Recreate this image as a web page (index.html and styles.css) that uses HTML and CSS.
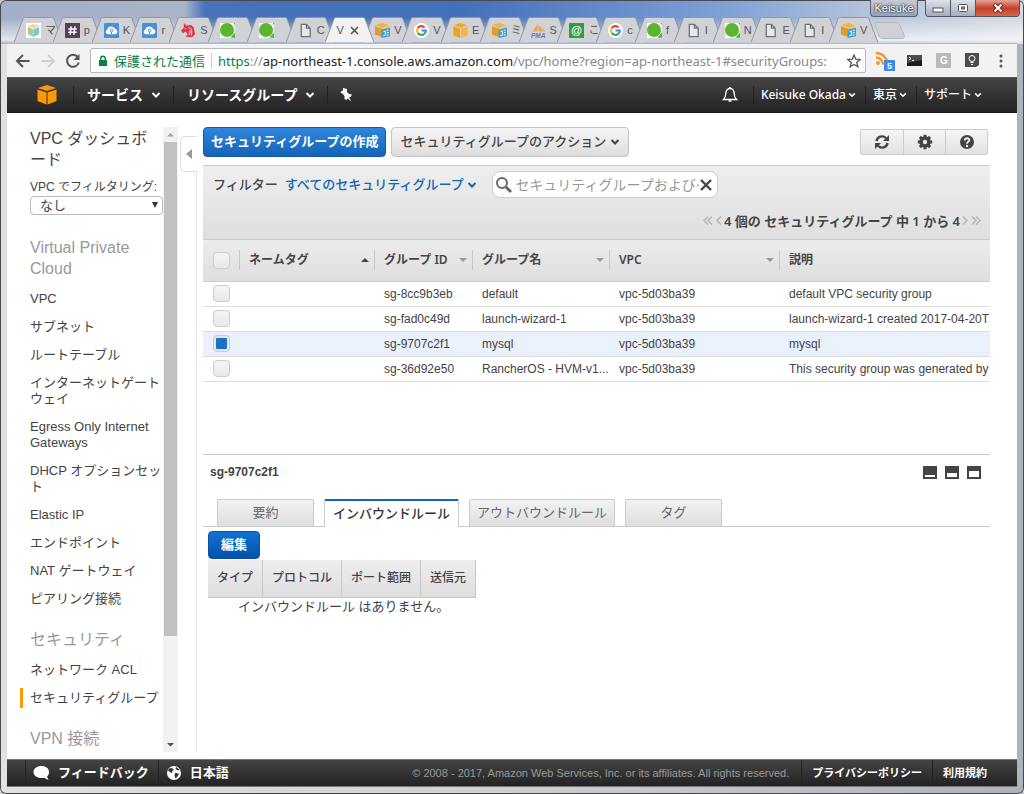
FILE: index.html
```html
<!DOCTYPE html>
<html lang="ja">
<head>
  <meta charset="UTF-8" />
  <title>VPC Management Console</title>
  <meta name="viewport" content="width=device-width, initial-scale=1.0" />
  <link rel="stylesheet" href="styles.css">
</head>
<body>
  <!-- shared icons -->
  <svg class="defs" width="0" height="0">
    <symbol id="tab-shape" viewBox="0 0 49 26" preserveAspectRatio="none">
      <path d="M0 25.5 L9 2 C9.500 .8 10 .5 11.500 .5 H37.500 C39 .5 39.500 .8 40 2 L49 25.500" stroke="#93979d" />
    </symbol>
    <symbol id="ico-box" viewBox="0 0 16 16">
      <path fill="#f5a623" d="M8 0 15 2.500 8 5 1 2.500Z" />
      <path fill="#f0a01c" d="M.5 3.500 7.500 6V16L.5 13Z" />
      <path fill="#f7b53c" d="M8.500 6 15.500 3.500V13L8.500 16Z" />
    </symbol>
    <symbol id="ico-vpc" viewBox="0 0 16 16">
      <path fill="#f3b33c" d="M8 0 15 2.500 8 5 0 2.500Z" />
      <path fill="#e59c22" d="M0 3.500 8 6V15L0 12.500Z" />
      <path fill="#f7bd4e" d="M8 6 15 3.500V9H8Z" />
      <path fill="#3e9fd8" d="M7 7 16 5V14L7 16Z" />
      <path fill="none" stroke="#fff" d="M9 9 11 8.500V13L9 13.500M12.500 8 14.500 7.500M12.500 10.500 14.500 10M12.500 13 14.500 12.500" />
    </symbol>
    <symbol id="ico-cloud" viewBox="0 0 16 16">
      <rect width="16" height="16" rx="1" fill="#4a90d9" />
      <path fill="#fff" d="M4 12a2.600 2.600 0 0 1-.5-5A4.500 4.500 0 0 1 12 6.500 2.800 2.800 0 0 1 12 12Z" />
      <circle cx="8" cy="8" r="1.500" fill="none" stroke="#4a90d9" />
      <path stroke="#4a90d9" d="M8 9.500V12" />
    </symbol>
    <symbol id="ico-q" viewBox="0 0 16 16">
      <rect width="16" height="16" fill="#fff" />
      <circle cx="7.500" cy="7.500" r="7.500" fill="#5bb531" />
      <path fill="#5bb531" d="M11 15.500 16 10V16ZM16 0V3L14.500 0Z" />
    </symbol>
    <symbol id="ico-doc" viewBox="0 0 16 16">
      <path fill="#e6e8eb" stroke="#6e7175" stroke-width="1.400" d="M3.500 1.500H9L13 5.500V14.500H3.500ZM9 1.500V5.500H13" />
    </symbol>
    <symbol id="ico-google" viewBox="0 0 16 16">
      <circle cx="8" cy="8" r="8" fill="#fff" />
      <g fill="none" stroke-width="2.200">
        <path stroke="#ea4335" d="M4 5.500A4.700 4.700 0 0 1 11.300 4.700" />
        <path stroke="#fbbc05" d="M4 5.500A5 5 0 0 0 4 10.500" />
        <path stroke="#34a853" d="M4 10.500A4.700 4.700 0 0 0 11 11.600" />
        <path stroke="#4285f4" d="M11 11.600A4.700 4.700 0 0 0 12.700 8H8" />
      </g>
    </symbol>
    <symbol id="ico-caret" viewBox="0 0 10 8">
      <path fill="none" stroke="currentColor" stroke-width="2" d="M1.500 2 5 5.500 8.500 2" />
    </symbol>
  </svg>

  <div class="window">
    <header class="titlebar">
      <button class="user-btn">Keisuke</button>
      <div class="win-btns">
        <button aria-label="最小化"><svg width="12" height="10"><rect x="1" y="5" width="10" height="4" fill="#fff" stroke="#555" /></svg></button>
        <button aria-label="最大化"><svg width="12" height="10"><rect x="1.500" y="1.500" width="9" height="7" rx="1" fill="#fff" stroke="#555" /><rect x="4.500" y="4" width="3" height="2" fill="#99a" stroke="#555" /></svg></button>
        <button class="close" aria-label="閉じる"><svg width="12" height="10"><path d="M2 1 10 9M10 1 2 9" stroke="#6b2a22" stroke-width="4" /><path d="M2.500 1.500 9.500 8.500M9.500 1.500 2.500 8.500" stroke="#fff" stroke-width="2" /></svg></button>
      </div>
    </header>

    <nav class="tabstrip">
      <div class="tabs">
        <div class="tab"><svg class="shape"><use href="#tab-shape" /></svg><svg class="fav" viewBox="0 0 16 16"><path fill="#fff" d="M0 0H16V16H0Z" /><path fill="#f9d48c" d="M8 1 14 3 8 6 2 3Z" /><path fill="#a4cf8f" d="M2 4 8 7V15L2 12Z" /><path fill="#7fc4dc" d="M8 7 14 4V12L8 15Z" /></svg><span>マ</span></div>
        <div class="tab"><svg class="shape"><use href="#tab-shape" /></svg><svg class="fav" viewBox="0 0 16 16"><path fill="#54405a" d="M0 0H16V16H0Z" /><path stroke="#fff" stroke-width="1.600" d="M6.500 3.500 5.500 12.500M10.500 3.500 9.500 12.500M3.500 6.500H12.500M3.500 9.800H12.500" /></svg><span>p</span></div>
        <div class="tab"><svg class="shape"><use href="#tab-shape" /></svg><svg class="fav"><use href="#ico-cloud" /></svg><span>K</span></div>
        <div class="tab"><svg class="shape"><use href="#tab-shape" /></svg><svg class="fav"><use href="#ico-cloud" /></svg><span>r</span></div>
        <div class="tab"><svg class="shape"><use href="#tab-shape" /></svg><svg class="fav" viewBox="0 0 16 16"><path fill="#d9394a" d="M3 0 6 3C10 1 14 3 14 7L15 12 12 15H5L7 12 5 9 2 11 0 8 3 5Z" /><path fill="none" stroke="#fff" d="M8 5C11 5 12 8 11 13M9 8C10 10 9 12 8 13M4 6H5" /></svg><span>S</span></div>
        <div class="tab"><svg class="shape"><use href="#tab-shape" /></svg><svg class="fav"><use href="#ico-q" /></svg></div>
        <div class="tab"><svg class="shape"><use href="#tab-shape" /></svg><svg class="fav"><use href="#ico-q" /></svg></div>
        <div class="tab"><svg class="shape"><use href="#tab-shape" /></svg><svg class="fav"><use href="#ico-doc" /></svg><span>C</span></div>
        <div class="tab active"><svg class="shape"><use href="#tab-shape" /></svg><span>V</span><button aria-label="タブを閉じる"><svg width="9" height="9"><path d="M1 1 8 8M8 1 1 8" stroke="#555" stroke-width="1.600" /></svg></button></div>
        <div class="tab"><svg class="shape"><use href="#tab-shape" /></svg><svg class="fav"><use href="#ico-vpc" /></svg><span>V</span></div>
        <div class="tab"><svg class="shape"><use href="#tab-shape" /></svg><svg class="fav"><use href="#ico-google" /></svg><span>V</span></div>
        <div class="tab"><svg class="shape"><use href="#tab-shape" /></svg><svg class="fav"><use href="#ico-box" /></svg><span>E</span></div>
        <div class="tab"><svg class="shape"><use href="#tab-shape" /></svg><svg class="fav"><use href="#ico-vpc" /></svg><span>ミ</span></div>
        <div class="tab"><svg class="shape"><use href="#tab-shape" /></svg><svg class="fav" viewBox="0 0 16 16"><path fill="#f3a04a" d="M7 1V9H2ZM8 2C11 4 12 7 12 9H8ZM12 4 15 9H13Z" /><text x="0" y="16" class="pma">PMA</text></svg><span>S</span></div>
        <div class="tab"><svg class="shape"><use href="#tab-shape" /></svg><svg class="fav" viewBox="0 0 16 16"><path fill="#2e9e41" d="M0 0H16V16H0Z" /><text x="2" y="12" class="at">@</text></svg><span>こ</span></div>
        <div class="tab"><svg class="shape"><use href="#tab-shape" /></svg><svg class="fav"><use href="#ico-google" /></svg><span>c</span></div>
        <div class="tab"><svg class="shape"><use href="#tab-shape" /></svg><svg class="fav"><use href="#ico-q" /></svg><span>f</span></div>
        <div class="tab"><svg class="shape"><use href="#tab-shape" /></svg><svg class="fav"><use href="#ico-doc" /></svg><span>I</span></div>
        <div class="tab"><svg class="shape"><use href="#tab-shape" /></svg><svg class="fav"><use href="#ico-q" /></svg><span>N</span></div>
        <div class="tab"><svg class="shape"><use href="#tab-shape" /></svg><svg class="fav"><use href="#ico-doc" /></svg><span>E</span></div>
        <div class="tab"><svg class="shape"><use href="#tab-shape" /></svg><svg class="fav"><use href="#ico-doc" /></svg><span>I</span></div>
        <div class="tab"><svg class="shape"><use href="#tab-shape" /></svg><svg class="fav"><use href="#ico-vpc" /></svg><span>V</span></div>
      </div>
      <button class="new-tab" aria-label="新しいタブ"><svg width="31" height="17"><path d="M3 .5H22C24 .5 25 1 26 3L30 13C31 15 30 16.500 28 16.500H9C7 16.500 6 16 5 14L1 3C.5 1.500 1 .5 3 .5Z" fill="#cfd1d4" stroke="#b5b8bd" /></svg></button>
    </nav>

    <div class="toolbar">
      <button aria-label="戻る"><svg width="16" height="16"><path d="M14.500 8H2.500M8 2 2 8 8 14" fill="none" stroke="#555" stroke-width="2" /></svg></button>
      <button aria-label="進む"><svg width="16" height="16"><path d="M1.500 8H13.500M8 2 14 8 8 14" fill="none" stroke="#d0d0d0" stroke-width="2" /></svg></button>
      <button aria-label="再読み込み"><svg width="16" height="16"><path d="M12.700 4A6 6 0 1 0 13.800 9.500" fill="none" stroke="#555" stroke-width="2" /><path d="M14.500 1V7H8.500Z" fill="#555" /></svg></button>
      <div class="omnibox">
        <svg width="10" height="12"><path d="M1 5H9V11H1Z" fill="#0b8043" /><path d="M2.700 5V3.500A2.300 2.300 0 0 1 7.300 3.500V5" fill="none" stroke="#0b8043" stroke-width="1.400" /></svg>
        <span class="secure">保護された通信</span>
        <span class="url"><b>https</b>://<i>ap-northeast-1.console.aws.amazon.com</i>/vpc/home?region=ap-northeast-1#securityGroups:</span>
        <svg width="14" height="14" viewBox="0 0 14 14"><path d="M7 1 8.700 5.200 13.200 5.500 9.700 8.400 10.900 12.800 7 10.400 3.100 12.800 4.300 8.400 .8 5.500 5.300 5.200Z" fill="none" stroke="#555" stroke-width="1.300" /></svg>
      </div>
      <button class="ext" aria-label="RSS"><svg width="20" height="20"><circle cx="3" cy="12" r="2" fill="#f29a2e" /><path d="M1 6.500A7 7 0 0 1 8 13.500M1 2A11.500 11.500 0 0 1 12.500 13.500" fill="none" stroke="#f29a2e" stroke-width="2.500" /><rect x="9" y="9" width="11" height="11" fill="#4285f4" /><text x="12" y="18" class="badge">5</text></svg></button>
      <button class="ext" aria-label="ターミナル"><svg width="15" height="12"><rect width="15" height="11" fill="#1c1c1c" /><path d="M0 0H15V5L0 8Z" fill="#4a4a4a" /><path d="M2 2 4 3.500 2 5M5 5.500H7" fill="none" stroke="#fff" /></svg></button>
      <button class="ext" aria-label="G"><svg width="15" height="15"><rect width="15" height="15" rx="1" fill="#b9b9b9" /><text x="4" y="11" class="g">G</text></svg></button>
      <button class="ext" aria-label="メモ"><svg width="14" height="15"><path d="M0 0H14V12L11 14H0Z" fill="#4c4c4c" /><circle cx="7" cy="5.500" r="3" fill="none" stroke="#fff" /><path d="M5.500 9.500H8.500M6 11.500H8" stroke="#fff" /></svg></button>
      <button class="ext" aria-label="メニュー"><svg width="4" height="14"><circle cx="2" cy="2" r="1.500" fill="#555" /><circle cx="2" cy="7" r="1.500" fill="#555" /><circle cx="2" cy="12" r="1.500" fill="#555" /></svg></button>
    </div>

    <div class="aws-header">
      <a class="logo" href="#" aria-label="AWS"><svg width="20" height="20" viewBox="0 0 20 20"><path fill="#f90" d="M10 0 19 3 10 6 1 3Z" /><path fill="#f90" d="M.5 4.500 9.500 7.500V19.500L.5 16Z" /><path fill="#f90" d="M10.500 7.500 19.500 4.500V16L10.500 19.500Z" /></svg></a>
      <a class="main-link" href="#">サービス <svg class="caret"><use href="#ico-caret" /></svg></a>
      <a class="main-link" href="#">リソースグループ <svg class="caret"><use href="#ico-caret" /></svg></a>
      <a class="pin" href="#" aria-label="ピン"><svg width="13" height="14" viewBox="0 0 13 14"><path fill="#fff" d="M3 0 7 1 7 4 9 6 12 6.500 10.500 9 9 9.500 11.500 13.500 7.500 10.500 6.500 12 4.500 11 4.500 8 2.500 5.500 .5 5 1.500 3 3 2.500Z" /></svg></a>
      <div class="account">
        <a class="bell" href="#" aria-label="通知"><svg width="16" height="16"><path d="M1.500 12.500C4 10 3.500 8 4 5.500A4 4 0 0 1 12 5.500C12.500 8 12 10 14.500 12.500Z" fill="none" stroke="#fff" stroke-width="1.300" /><path d="M8 0V2M6.500 14H9.500" stroke="#fff" stroke-width="1.600" /></svg></a>
        <a href="#">Keisuke Okada <svg class="caret"><use href="#ico-caret" /></svg></a>
        <a href="#">東京 <svg class="caret"><use href="#ico-caret" /></svg></a>
        <a href="#">サポート <svg class="caret"><use href="#ico-caret" /></svg></a>
      </div>
    </div>

    <div class="console">
      <aside class="sidebar">
        <div class="menu">
          <h1>VPC ダッシュボード</h1>
          <label for="vpcFilter">VPC でフィルタリング:</label>
          <div class="select-wrap">
            <select id="vpcFilter"><option>なし</option></select>
          </div>
          <h2>Virtual Private Cloud</h2>
          <ul>
            <li><a href="#">VPC</a></li>
            <li><a href="#">サブネット</a></li>
            <li><a href="#">ルートテーブル</a></li>
            <li><a href="#">インターネットゲートウェイ</a></li>
            <li><a href="#">Egress Only Internet Gateways</a></li>
            <li><a href="#">DHCP オプションセット</a></li>
            <li><a href="#">Elastic IP</a></li>
            <li><a href="#">エンドポイント</a></li>
            <li><a href="#">NAT ゲートウェイ</a></li>
            <li><a href="#">ピアリング接続</a></li>
          </ul>
          <h2>セキュリティ</h2>
          <ul>
            <li><a href="#">ネットワーク ACL</a></li>
            <li class="current"><a href="#">セキュリティグループ</a></li>
          </ul>
          <h2>VPN 接続</h2>
        </div>
        <div class="scrollbar">
          <svg width="15" height="15"><path d="M4 9.500 7.500 6 11 9.500Z" fill="#a3a3a3" /></svg>
          <div class="track"><div class="thumb"></div></div>
          <svg width="15" height="15"><path d="M4 6 7.500 9.500 11 6Z" fill="#505050" /></svg>
        </div>
      </aside>

      <div class="splitter">
        <button class="collapse" aria-label="折りたたむ"><svg width="6" height="10"><path d="M6 0V10L0 5Z" fill="#999" /></svg></button>
        <div class="line"></div>
      </div>

      <main>
        <div class="actions">
          <button class="primary">セキュリティグループの作成</button>
          <button class="secondary">セキュリティグループのアクション <svg class="caret"><use href="#ico-caret" /></svg></button>
          <div class="icon-group">
            <button aria-label="更新"><svg width="16" height="16"><path d="M2.500 7A5.500 5.500 0 0 1 12 4.200M13.500 9A5.500 5.500 0 0 1 4 11.800" fill="none" stroke="#444" stroke-width="2.400" /><path d="M15 1V7H9ZM1 15V9H7Z" fill="#444" /></svg></button>
            <button aria-label="設定"><svg width="16" height="16"><circle cx="8" cy="8" r="4" fill="none" stroke="#444" stroke-width="3.600" /><path d="M8 .8V3.500M8 12.500V15.200M.8 8H3.500M12.500 8H15.200M2.900 2.900 4.800 4.800M11.200 11.200 13.100 13.100M2.900 13.100 4.800 11.200M11.200 4.800 13.100 2.900" stroke="#444" stroke-width="3" /></svg></button>
            <button aria-label="ヘルプ"><svg width="16" height="16"><circle cx="8" cy="8" r="7" fill="#444" /><path d="M5.700 6.500C5.700 3.300 10.500 3.600 10.300 6.300 10.200 7.800 8 7.900 8 9.700" fill="none" stroke="#eee" stroke-width="1.900" /><circle cx="8" cy="12" r="1.200" fill="#eee" /></svg></button>
          </div>
        </div>

        <div class="filter-bar">
          <div class="filter-row">
            <span>フィルター</span>
            <a href="#">すべてのセキュリティグループ <svg class="caret"><use href="#ico-caret" /></svg></a>
            <div class="search">
              <svg width="18" height="18"><circle cx="7" cy="7" r="5" fill="none" stroke="#666" stroke-width="2" /><path d="M11 11 16 16" stroke="#666" stroke-width="3" /></svg>
              <input type="text" aria-label="検索" placeholder="セキュリティグループおよびそのプロパティ">
              <button aria-label="クリア"><svg width="14" height="14"><path d="M2 2 12 12M12 2 2 12" stroke="#444" stroke-width="2.400" /></svg></button>
            </div>
          </div>
          <div class="pager">
            <svg width="20" height="12"><path d="M5 1.500 1 5.500 5 9.500M9 1.500 5 5.500 9 9.500M18 1.500 14 5.500 18 9.500" fill="none" stroke="#b5b5b5" stroke-width="1.500" /></svg>
            <span>4 個の セキュリティグループ 中 1 から 4</span>
            <svg width="20" height="12"><path d="M2 1.500 6 5.500 2 9.500M11 1.500 15 5.500 11 9.500M15 1.500 19 5.500 15 9.500" fill="none" stroke="#b5b5b5" stroke-width="1.500" /></svg>
          </div>
        </div>

        <div class="grid-pane">
          <table class="groups">
            <colgroup><col class="c-check"><col class="c-tag"><col class="c-id"><col class="c-name"><col class="c-vpc"><col></colgroup>
            <thead>
              <tr>
                <th><input type="checkbox" aria-label="すべて選択"></th>
                <th><div class="asc">ネームタグ</div></th>
                <th><div class="desc">グループ ID</div></th>
                <th><div class="desc">グループ名</div></th>
                <th><div class="desc">VPC</div></th>
                <th><div>説明</div></th>
              </tr>
            </thead>
            <tbody>
              <tr><td><input type="checkbox" aria-label="default"></td><td></td><td>sg-8cc9b3eb</td><td>default</td><td>vpc-5d03ba39</td><td>default VPC security group</td></tr>
              <tr><td><input type="checkbox" aria-label="launch-wizard-1"></td><td></td><td>sg-fad0c49d</td><td>launch-wizard-1</td><td>vpc-5d03ba39</td><td>launch-wizard-1 created 2017-04-20T10</td></tr>
              <tr class="selected"><td><input type="checkbox" aria-label="mysql" checked></td><td></td><td>sg-9707c2f1</td><td>mysql</td><td>vpc-5d03ba39</td><td>mysql</td></tr>
              <tr><td><input type="checkbox" aria-label="RancherOS"></td><td></td><td>sg-36d92e50</td><td>RancherOS - HVM-v1...</td><td>vpc-5d03ba39</td><td>This security group was generated by A</td></tr>
            </tbody>
          </table>
        </div>

        <section class="details">
          <div class="details-head">
            <h3>sg-9707c2f1</h3>
            <div class="layout-btns">
              <button aria-label="最小"><svg width="14" height="13"><rect width="14" height="13" fill="#444" /><rect x="2" y="9" width="10" height="2" fill="#fff" /></svg></button>
              <button aria-label="中"><svg width="14" height="13"><rect width="14" height="13" fill="#444" /><rect x="2" y="7" width="10" height="4" fill="#fff" /></svg></button>
              <button aria-label="最大"><svg width="14" height="13"><rect width="14" height="13" fill="#444" /><rect x="2" y="5" width="10" height="6" fill="#fff" /></svg></button>
            </div>
          </div>
          <div class="detail-tabs">
            <button>要約</button>
            <button class="on">インバウンドルール</button>
            <button>アウトバウンドルール</button>
            <button>タグ</button>
          </div>
          <div class="rules">
            <button class="primary edit">編集</button>
            <table>
              <tr><th>タイプ</th><th>プロトコル</th><th>ポート範囲</th><th>送信元</th></tr>
            </table>
            <p>インバウンドルール はありません。</p>
          </div>
        </section>
      </main>
    </div>

    <footer>
      <a class="feedback" href="#"><svg width="17" height="16"><path d="M8.500 1C13 1 16 3.500 16 7 16 9 15.200 10.500 14 11.500L15.500 15 11 12.800C5 14 .5 11 .5 7 .5 3.500 4 1 8.500 1Z" fill="#fff" /></svg>フィードバック</a>
      <a class="lang" href="#"><svg width="16" height="16"><circle cx="8" cy="8" r="7" fill="#fff" /><path d="M3 3.500 6 3 8 5 6 6 6.500 8 4.500 7.500 2 5.500ZM9 8 13 8.500 12 11 9.500 13.500 8.500 10.500ZM10 2 13.500 4.500 12 5.500 9.500 4Z" fill="#333" /></svg>日本語</a>
      <span class="copy">© 2008 - 2017, Amazon Web Services, Inc. or its affiliates. All rights reserved.</span>
      <a class="small" href="#">プライバシーポリシー</a>
      <a class="small" href="#">利用規約</a>
    </footer>
  </div>
</body>
</html>
```
FILE: styles.css
```css
* {
  box-sizing: border-box;
}

body {
  margin: 0;
  color: #444;
  font-family: "Liberation Sans", "Noto Sans CJK JP", sans-serif;
  font-size: 13px;
  line-height: 16px;
  background: #c9c9cb;
}

button {
  padding: 0;
  border: none;
  background: none;
  color: inherit;
  font: inherit;
  cursor: pointer;
}

a {
  color: inherit;
  text-decoration: none;
}

svg {
  display: block;
  flex: none;
}

.defs { position: absolute; }

.caret {
  display: inline-block;
  width: 10px;
  height: 8px;
}

/* browser window */
.window {
  display: flex;
  flex-direction: column;
  min-height: 100vh;
  padding: 0 7px 7px;
  border-radius: 6px;
  box-shadow: inset 0 0 0 1px #45484d;
  background:
    linear-gradient(to bottom, transparent 18px, rgba(255, 255, 255, 0.7) 40px, transparent 44px),
    linear-gradient(to right, #a3afc8, #a9b4ca 18%, #4873ba 20%, #4470b9 45%, #7c9fd6 70%, #b9c6dc 86%, #d6dae2) top / 100% 44px no-repeat,
    linear-gradient(to right, #e2e0e1 0, #cfcfd1 50%, #aeb3bb);
}

.titlebar {
  display: flex;
  justify-content: flex-end;
  gap: 7px;
  height: 17px;
  margin-right: -3px;
}

.user-btn {
  width: 48px;
  height: 17px;
  border: 1px solid #59606f;
  border-top: none;
  border-radius: 0 0 4px 4px;
  background: linear-gradient(#c5cbd7, #98a2b5);
  color: #fff;
  font-size: 11px;
  text-shadow: 0 0 2px #222, 0 0 2px #222;
}

.win-btns {
  display: flex;
  border: 1px solid #4f5664;
  border-top: none;
  border-radius: 0 0 4px 4px;
  overflow: hidden;
}

.win-btns button {
  display: flex;
  align-items: center;
  justify-content: center;
  width: 25px;
  border-right: 1px solid #4f5664;
  background: linear-gradient(#dde2ea, #a3adbd);
}

.win-btns .close {
  width: 43px;
  border-right: none;
  background: linear-gradient(#e3a497, #c5402a 50%, #d4674a);
}

.tabstrip {
  display: flex;
  height: 26px;
  padding-left: 7px;
}

.tabs {
  display: flex;
  flex: 1;
}

.tab {
  position: relative;
  display: flex;
  flex: 1 0 0;
  min-width: 0;
  align-items: center;
  gap: 4px;
  padding-left: 12px;
  color: #555;
  font-size: 11px;
}

.tab .shape {
  position: absolute;
  top: 0;
  left: 0;
  width: 49px;
  height: 26px;
  fill: #d0d2d6;
}

.tab .fav {
  position: relative;
  width: 15px;
  height: 15px;
}

.tab span {
  position: relative;
  width: 7px;
  white-space: nowrap;
}

.tab.active {
  z-index: 1;
}

.tab.active .shape { fill: #f2f2f2; }
.tab.active span { width: 9px; }
.tab.active button { position: relative; }

.pma { font: italic bold 7px "Liberation Sans", sans-serif; fill: #6c78af; }
.at { font: bold 12px "Liberation Sans", sans-serif; fill: #fff; }
.badge { font: bold 9px "Liberation Sans", sans-serif; fill: #fff; }
.g { font: bold 10px "Liberation Sans", sans-serif; fill: #fff; }

.new-tab {
  width: 31px;
  margin-left: 6px;
  margin-right: 112px;
}

.toolbar {
  display: flex;
  align-items: center;
  gap: 9px;
  height: 34px;
  padding: 0 6px 0 8px;
  border-top: 1px solid #b5b8bd;
  background: #f2f2f2;
}

.toolbar > button {
  display: flex;
  align-items: center;
  justify-content: center;
  width: 16px;
}

.toolbar .ext {
  width: 20px;
}

.omnibox {
  display: flex;
  flex: 1;
  min-width: 0;
  align-items: center;
  height: 25px;
  padding: 0 4px 0 7px;
  border: 1px solid #b8b8b8;
  border-radius: 2px;
  background: #fff;
  font-family: "Noto Sans", "Noto Sans CJK JP", sans-serif;
}

.secure {
  margin-left: 6px;
  padding-right: 6px;
  border-right: 1px solid #ccc;
  color: #0b8043;
  white-space: nowrap;
}

.url {
  flex: 1;
  min-width: 0;
  margin-left: 6px;
  overflow: hidden;
  color: #888;
  white-space: nowrap;
}

.url b { color: #0b8043; font-weight: normal; }
.url i { color: #222; font-style: normal; }

/* AWS navigation */
.aws-header {
  display: flex;
  align-items: center;
  height: 36px;
  border-top: 1px solid #555;
  border-bottom: 1px solid #1a1a1a;
  background: linear-gradient(#444, #232323);
  color: #fff;
  font-family: "Noto Sans", "Noto Sans CJK JP", sans-serif;
}

.aws-header a {
  display: flex;
  align-items: center;
  height: 18px;
  border-left: 1px solid #222;
  font-weight: 600;
  white-space: nowrap;
}

.aws-header .logo {
  margin: 0 16px 0 30px;
  border: none;
}

.aws-header .main-link {
  gap: 8px;
  padding: 0 12px 0 13px;
  font-size: 14px;
}

.aws-header .pin {
  padding-left: 12px;
}

.account {
  display: flex;
  margin-left: auto;
  margin-right: 27px;
}

.aws-header .account a {
  gap: 2px;
  padding: 0 9px 0 7px;
  font-size: 12px;
  font-weight: 500;
}

.aws-header .account .bell {
  padding-right: 15px;
  border: none;
}

.aws-header .account a:last-child {
  padding-right: 8px;
}

.account .caret {
  width: 8px;
}

/* page body */
.console {
  display: flex;
  flex: 1;
  padding: 14px 27px 7px 0;
  background: #fff;
}

.sidebar {
  display: flex;
  width: 171px;
}

.menu {
  flex: 1;
  min-width: 0;
  padding-left: 23px;
}

.menu h1 {
  margin: 1px 0 9px;
  font-size: 16px;
  font-weight: normal;
  line-height: 21px;
}

.menu label {
  display: block;
  height: 17px;
  font-size: 12px;
  white-space: nowrap;
}

.select-wrap {
  position: relative;
}

.select-wrap::after {
  position: absolute;
  top: 6px;
  right: 5px;
  border: 3px solid transparent;
  border-top: 6px solid #333;
  border-bottom: none;
  content: "";
}

.menu select {
  display: block;
  width: 100%;
  height: 19px;
  padding: 0 9px;
  border: 1px solid #bbb;
  border-radius: 4px;
  background: #fff;
  color: #444;
  font: 13px/17px "Liberation Sans", "Noto Sans CJK JP", sans-serif;
  appearance: none;
}

.menu h2 {
  margin: 22px 0 12px;
  color: #999;
  font-size: 16px;
  font-weight: normal;
  line-height: 21px;
}

.menu select + h2,
.menu h2:last-child {
  margin-bottom: 0;
}

.menu ul {
  display: flex;
  flex-direction: column;
  gap: 12px;
  margin: 0;
  padding: 0;
  list-style: none;
}

.menu li a {
  display: block;
}

.menu .current {
  margin: -2px 0 -2px -10px;
  padding: 2px 0 2px 7px;
  border-left: 3px solid #f90;
}

.scrollbar {
  display: flex;
  flex-direction: column;
  width: 15px;
  background: #f1f1f1;
}

.track {
  flex: 1;
  padding: 0 1px;
}

.thumb {
  height: 83%;
  background: #c1c1c1;
}

.splitter {
  display: flex;
  flex-direction: column;
  width: 19px;
  padding: 9px 0 0 2px;
}

.collapse {
  display: flex;
  align-items: center;
  justify-content: center;
  height: 36px;
  border: 1px solid #ddd;
  border-right: none;
  border-radius: 5px 0 0 5px;
}

.splitter .line {
  flex: 1;
  border-right: 1px solid #e5e5e5;
}

main {
  flex: 1;
  min-width: 0;
  margin-left: 6px;
}

.actions {
  display: flex;
  align-items: flex-start;
  gap: 5px;
  height: 38px;
}

.primary,
.secondary {
  height: 30px;
  padding: 0 7px;
  border: 1px solid #1a5ba8;
  border-radius: 4px;
  background: linear-gradient(#2f86dc, #1464b8);
  color: #fff;
  font-weight: bold;
  white-space: nowrap;
}

.secondary {
  padding: 0 8px;
  border-color: #c4c4c4;
  background: linear-gradient(#f5f5f5, #ddd);
  color: #444;
  font-weight: 500;
}

.icon-group {
  display: flex;
  margin: 2px 2px 0 auto;
  border: 1px solid #ccc;
  border-radius: 2px;
  background: linear-gradient(#f5f5f5, #e2e2e2);
}

.icon-group button {
  display: flex;
  align-items: center;
  justify-content: center;
  width: 42px;
  height: 24px;
}

.icon-group button + button {
  border-left: 1px solid #ccc;
}

.filter-bar {
  height: 75px;
  padding: 5px 9px 0 10px;
  border-top: 1px solid #ccc;
  border-bottom: 1px solid #ccc;
  background: linear-gradient(#eee, #dfdfdf);
  font-weight: 500;
}

.filter-row {
  display: flex;
  align-items: center;
  white-space: nowrap;
}

.filter-row a {
  margin: 0 15px 0 7px;
  color: #1166bb;
}

.search {
  display: flex;
  align-items: center;
  width: 226px;
  height: 27px;
  padding: 0 4px 0 2px;
  border: 1px solid #ccc;
  border-radius: 8px;
  background: #fff;
}

.search input {
  flex: 1;
  min-width: 0;
  margin-left: 2px;
  padding: 0;
  border: none;
  font: 14px/20px "Liberation Sans", "Noto Sans CJK JP", sans-serif;
}

.search input::placeholder {
  color: #999;
}

.pager {
  display: flex;
  align-items: center;
  justify-content: flex-end;
  gap: 1px;
  margin-top: 15px;
  font-family: "Noto Sans", "Noto Sans CJK JP", sans-serif;
  font-weight: 600;
}

.grid-pane {
  height: 214px;
  overflow: hidden;
}

.groups {
  width: 100%;
  border-collapse: collapse;
  table-layout: fixed;
  font-size: 12px;
}

.c-check { width: 36px; }
.c-tag { width: 135px; }
.c-id { width: 98px; }
.c-name { width: 137px; }
.c-vpc { width: 170px; }

.groups thead {
  background: linear-gradient(#ececec, #dedede);
}

.groups th {
  height: 41px;
  padding: 0;
  border-bottom: 1px solid #ccc;
  font-family: "Noto Sans", "Noto Sans CJK JP", sans-serif;
  font-weight: 600;
  text-align: left;
}

.groups th div {
  display: flex;
  align-items: center;
  justify-content: space-between;
  height: 20px;
  padding: 0 5px 0 9px;
  border-left: 1px solid #c8c8c8;
}

.groups .asc::after,
.groups .desc::after {
  border: 4px solid transparent;
  border-top: none;
  border-bottom: 4px solid #444;
  content: "";
}

.groups .desc::after {
  border-top: 4px solid #999;
  border-bottom: none;
}

.groups td {
  height: 25px;
  padding: 0 0 0 10px;
  overflow: hidden;
  border-bottom: 1px solid #ddd;
  white-space: nowrap;
}

.selected {
  background: #e8f1fc;
}

.groups input {
  display: block;
  width: 17px;
  height: 17px;
  margin: 0;
  border: 1px solid #ccc;
  border-radius: 4px;
  background: linear-gradient(#f5f5f5, #e8e8e8);
  appearance: none;
}

.groups th input {
  margin-left: 10px;
}

.groups input:checked {
  border: 3px solid #e6e6e6;
  background: #1b70c9;
  outline: 1px solid #ccc;
  outline-offset: -1px;
}

/* details pane */
.details {
  border-top: 1px solid #ccc;
}

.details-head {
  display: flex;
  align-items: center;
  justify-content: space-between;
  height: 34px;
  padding: 0 9px 0 7px;
}

.details-head h3 {
  margin: 0;
  font-size: 12px;
}

.layout-btns {
  display: flex;
  gap: 8px;
}

.detail-tabs {
  display: flex;
  align-items: flex-end;
  gap: 10px;
  height: 38px;
  padding-left: 14px;
  border-bottom: 1px solid #ccc;
}

.detail-tabs button {
  min-width: 97px;
  height: 27px;
  padding: 0 7px;
  border: 1px solid #ccc;
  border-bottom: none;
  border-radius: 2px 2px 0 0;
  background: linear-gradient(#f3f3f3, #dedede);
  color: #666;
}

.detail-tabs .on {
  height: 28px;
  padding: 0 8px;
  margin-bottom: -1px;
  border-top: 2px solid #1166bb;
  background: #fff;
  color: #333;
  font-weight: 500;
}

.rules {
  padding: 4px 0 0 5px;
}

.edit {
  display: block;
  width: 52px;
  height: 28px;
  border-color: #0b52a0;
  background: linear-gradient(#1272d2, #0352ab);
}

.rules table {
  margin-top: 1px;
  border-collapse: collapse;
  background: linear-gradient(#eee, #dedede);
  font-size: 12px;
}

.rules th {
  height: 37px;
  padding: 0 9px;
  border-right: 1px solid #c8c8c8;
  border-bottom: 1px solid #c8c8c8;
  font-weight: 500;
}

.rules p {
  margin: 1px 0 0 30px;
}

footer {
  display: flex;
  height: 28px;
  padding: 0 20px 0 18px;
  border-top: 1px solid #777;
  border-bottom: 1px solid #777;
  background: linear-gradient(#444, #222);
  color: #fff;
  font-weight: bold;
}

footer a {
  display: flex;
  align-items: center;
  gap: 8px;
  padding: 0 9px 0 7px;
  border-left: 1px solid #222;
  white-space: nowrap;
}

footer .copy {
  align-self: center;
  margin-left: auto;
  margin-right: 12px;
  color: #999;
  font-size: 11px;
  font-weight: normal;
}

footer .small {
  padding: 0 10px;
  font-size: 11px;
}
```
